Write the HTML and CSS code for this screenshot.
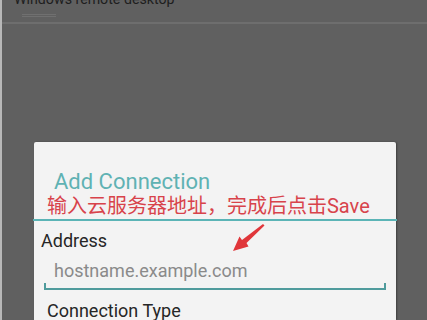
FILE: index.html
```html
<!DOCTYPE html>
<html>
<head>
<meta charset="utf-8">
<link rel="stylesheet" href="styles.css">
</head>
<body>
<div class="screen">
  <div class="appbar">
    <div class="apptitle">Windows remote desktop</div>
    <div class="tabmark"></div>
    <div class="rule"></div>
  </div>
  <div class="dialog">
    <div class="dtitle">Add Connection</div>
    <div class="note">输入云服务器地址，完成后点击Save</div>
    <div class="divider"></div>
    <div class="label">Address</div>
    <div class="field"><span class="placeholder">hostname.example.com</span></div>
    <div class="label label2">Connection Type</div>
    <svg class="arrow" width="40" height="36" viewBox="0 0 40 36">
      <polygon points="33,2 34.5,3.5 16.5,21 18.5,24.5 3,29 9.5,14.5 12,18" fill="#e0363a"/>
    </svg>
  </div>
</div>
</body>
</html>
```
FILE: styles.css
```css
html, body { margin: 0; padding: 0; }
body {
  width: 427px;
  height: 320px;
  overflow: hidden;
  background: #606060;
  font-family: Roboto, "Noto Sans CJK SC", sans-serif;
}
.screen {
  position: relative;
  height: 320px;
  overflow: hidden;
  border-left: 2px solid #b8b8b8;
  box-sizing: border-box;
}
.appbar {
  height: 142px;
  display: flex;
  flex-direction: column;
}
.apptitle {
  margin-top: -10px;
  padding-left: 12px;
  font-size: 14.2px;
  line-height: 18px;
  color: #1e1e1e;
  white-space: nowrap;
}
.tabmark {
  margin: 6px 0 0 20px;
  width: 34px;
  height: 3px;
  border-top: 1px solid #707070;
  border-bottom: 1px solid #707070;
  box-sizing: border-box;
}
.rule {
  margin-top: 5px;
  height: 2px;
  background: #6e6e6e;
}
.dialog {
  position: relative;
  margin-left: 32px;
  width: 362px;
  height: 178px;
  background: #f3f3f3;
  box-shadow: 1px 0 2px rgba(0,0,0,0.35);
  border-radius: 2px 2px 0 0;
}
.dtitle {
  padding: 27px 0 0 20px;
  font-size: 22px;
  line-height: 26px;
  color: #5fb2b3;
}
.note {
  padding-left: 13px;
  font-size: 20px;
  line-height: 22px;
  color: #d8434b;
  white-space: nowrap;
}
.divider {
  margin: 2px -1px 0 -1px;
  height: 2px;
  background: #5bb4b6;
}
.label {
  padding: 9px 0 0 7px;
  font-size: 18px;
  line-height: 22px;
  color: #262626;
}
.field {
  position: relative;
  margin: 8px 10px 0 10px;
  padding: 0 0 6px 10px;
  border-bottom: 2px solid #4f9b9c;
  font-size: 18px;
  line-height: 22px;
}
.field::before, .field::after {
  content: "";
  position: absolute;
  bottom: 0;
  width: 2px;
  height: 5px;
  background: #4f9b9c;
}
.field::before { left: 0; }
.field::after { right: 0; }
.placeholder { color: #8a8a8a; }
.label2 { padding: 10px 0 0 13px; }
.arrow {
  position: absolute;
  left: 196px;
  top: 80px;
}
```
